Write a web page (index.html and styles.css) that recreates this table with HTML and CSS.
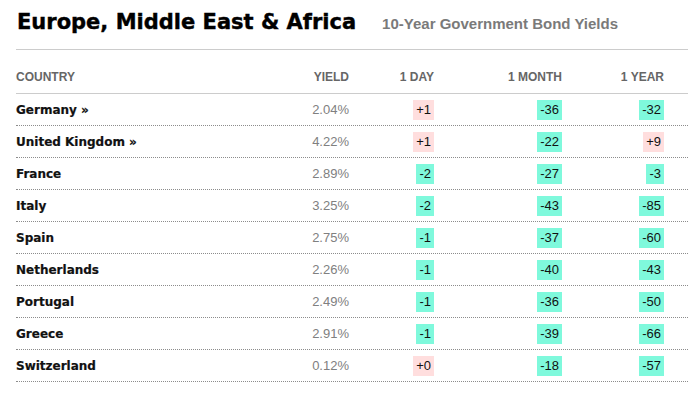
FILE: index.html
```html
<!DOCTYPE html>
<html lang="en">
<head>
<meta charset="utf-8">
<title>Europe, Middle East &amp; Africa — 10-Year Government Bond Yields</title>
<link rel="stylesheet" href="styles.css">
</head>
<body>
<div class="wrap">
  <header class="head">
    <h1 class="title">Europe, Middle East &amp; Africa</h1>
    <span class="sub">10-Year Government Bond Yields</span>
  </header>
  <div class="table">
    <div class="row thead">
      <div class="th">COUNTRY</div>
      <div class="th num">YIELD</div>
      <div class="th num">1 DAY</div>
      <div class="th num">1 MONTH</div>
      <div class="th num">1 YEAR</div>
    </div>
    <div class="row">
      <div class="name">Germany »</div>
      <div class="yield">2.04%</div>
      <div class="num"><span class="chg up">+1</span></div>
      <div class="num"><span class="chg down">-36</span></div>
      <div class="num"><span class="chg down">-32</span></div>
    </div>
    <div class="row">
      <div class="name">United Kingdom »</div>
      <div class="yield">4.22%</div>
      <div class="num"><span class="chg up">+1</span></div>
      <div class="num"><span class="chg down">-22</span></div>
      <div class="num"><span class="chg up">+9</span></div>
    </div>
    <div class="row">
      <div class="name">France</div>
      <div class="yield">2.89%</div>
      <div class="num"><span class="chg down">-2</span></div>
      <div class="num"><span class="chg down">-27</span></div>
      <div class="num"><span class="chg down">-3</span></div>
    </div>
    <div class="row">
      <div class="name">Italy</div>
      <div class="yield">3.25%</div>
      <div class="num"><span class="chg down">-2</span></div>
      <div class="num"><span class="chg down">-43</span></div>
      <div class="num"><span class="chg down">-85</span></div>
    </div>
    <div class="row">
      <div class="name">Spain</div>
      <div class="yield">2.75%</div>
      <div class="num"><span class="chg down">-1</span></div>
      <div class="num"><span class="chg down">-37</span></div>
      <div class="num"><span class="chg down">-60</span></div>
    </div>
    <div class="row">
      <div class="name">Netherlands</div>
      <div class="yield">2.26%</div>
      <div class="num"><span class="chg down">-1</span></div>
      <div class="num"><span class="chg down">-40</span></div>
      <div class="num"><span class="chg down">-43</span></div>
    </div>
    <div class="row">
      <div class="name">Portugal</div>
      <div class="yield">2.49%</div>
      <div class="num"><span class="chg down">-1</span></div>
      <div class="num"><span class="chg down">-36</span></div>
      <div class="num"><span class="chg down">-50</span></div>
    </div>
    <div class="row">
      <div class="name">Greece</div>
      <div class="yield">2.91%</div>
      <div class="num"><span class="chg down">-1</span></div>
      <div class="num"><span class="chg down">-39</span></div>
      <div class="num"><span class="chg down">-66</span></div>
    </div>
    <div class="row">
      <div class="name">Switzerland</div>
      <div class="yield">0.12%</div>
      <div class="num"><span class="chg up">+0</span></div>
      <div class="num"><span class="chg down">-18</span></div>
      <div class="num"><span class="chg down">-57</span></div>
    </div>
  </div>
</div>
</body>
</html>
```
FILE: styles.css
```css
html, body {
  margin: 0;
  padding: 0;
  background: #fff;
}

body {
  font-family: "Liberation Sans", Arial, sans-serif;
  color: #000;
  overflow: hidden;
}

.wrap {
  width: 672px;
  padding-left: 16px;
}

.head {
  display: flex;
  align-items: baseline;
  gap: 26px;
  height: 49px;
  box-sizing: border-box;
  padding: 10px 0 0 1px;
}

.title {
  margin: 0;
  font-family: "DejaVu Sans", sans-serif;
  font-weight: bold;
  font-size: 21px;
  line-height: 24px;
  letter-spacing: 0;
  -webkit-text-stroke: 0.4px #000;
  color: #000;
}

.sub {
  font-family: "Liberation Sans", Arial, sans-serif;
  font-weight: bold;
  font-size: 15px;
  color: #7a7a7a;
}

.table {
  border-top: 1px solid #cccccc;
}

.row {
  display: grid;
  grid-template-columns: 1fr 99px 85px 128px 102px;
  padding-right: 24px;
  align-items: center;
  height: 32px;
  box-sizing: border-box;
  border-bottom: 1px dotted #8c8c8c;
}

.row.thead {
  height: 44px;
  align-items: start;
  padding-top: 20px;
  border-bottom: 1px solid #cccccc;
}

.th {
  font-size: 12px;
  line-height: 14px;
  font-weight: bold;
  color: #666;
}

.num {
  text-align: right;
}

.name {
  font-family: "DejaVu Sans", sans-serif;
  font-weight: bold;
  font-size: 12px;
  color: #111;
  -webkit-text-stroke: 0.2px #111;
}

.yield {
  text-align: right;
  font-size: 13px;
  color: #808080;
}

.chg {
  display: inline-block;
  padding: 0 3px;
  font-size: 13px;
  line-height: 20px;
  color: #111;
}

.chg.up {
  background: #ffdede;
}

.chg.down {
  background: #7ff9dc;
}
```
